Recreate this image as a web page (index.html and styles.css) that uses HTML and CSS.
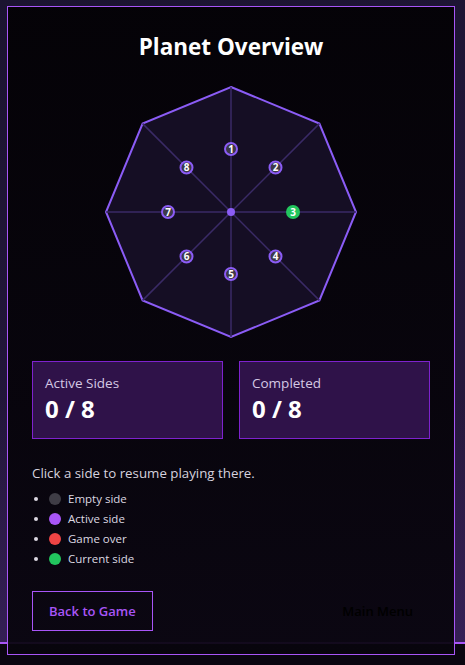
FILE: index.html
```html
<!DOCTYPE html>
<html>
<head>
<meta charset="utf-8">
<link rel="stylesheet" href="styles.css">
</head>
<body>
<div class="scene">
  <div class="footer-bar"></div>
</div>
<div class="modal">
  <h1 class="title">Planet Overview</h1>
  <svg class="planet" width="260" height="260" viewBox="-130 -130 260 260">
    <polygon class="oct" points="0,-125 88.4,-88.4 125,0 88.4,88.4 0,125 -88.4,88.4 -125,0 -88.4,-88.4"/>
    <g class="spokes">
      <line x1="0" y1="0" x2="0" y2="-125"/>
      <line x1="0" y1="0" x2="88.4" y2="-88.4"/>
      <line x1="0" y1="0" x2="125" y2="0"/>
      <line x1="0" y1="0" x2="88.4" y2="88.4"/>
      <line x1="0" y1="0" x2="0" y2="125"/>
      <line x1="0" y1="0" x2="-88.4" y2="88.4"/>
      <line x1="0" y1="0" x2="-125" y2="0"/>
      <line x1="0" y1="0" x2="-88.4" y2="-88.4"/>
    </g>
    <circle class="core" cx="0" cy="0" r="4"/>
    <g class="marker"><circle cx="0" cy="-63" r="6"/><text x="0" y="-59.5">1</text></g>
    <g class="marker"><circle cx="44.5" cy="-44.5" r="6"/><text x="44.5" y="-41">2</text></g>
    <g class="marker current"><circle cx="62" cy="0" r="7"/><text x="62" y="3.5">3</text></g>
    <g class="marker"><circle cx="44.5" cy="44.5" r="6"/><text x="44.5" y="48">4</text></g>
    <g class="marker"><circle cx="0" cy="62" r="6"/><text x="0" y="65.5">5</text></g>
    <g class="marker"><circle cx="-44.5" cy="44.5" r="6"/><text x="-44.5" y="48">6</text></g>
    <g class="marker"><circle cx="-63" cy="0" r="6"/><text x="-63" y="3.5">7</text></g>
    <g class="marker"><circle cx="-44.5" cy="-44.5" r="6"/><text x="-44.5" y="-41">8</text></g>
  </svg>
  <div class="stats">
    <div class="stat">
      <div class="stat-label">Active Sides</div>
      <div class="stat-value">0 / 8</div>
    </div>
    <div class="stat">
      <div class="stat-label">Completed</div>
      <div class="stat-value">0 / 8</div>
    </div>
  </div>
  <p class="hint">Click a side to resume playing there.</p>
  <ul class="legend">
    <li><span class="dot empty"></span>Empty side</li>
    <li><span class="dot active"></span>Active side</li>
    <li><span class="dot over"></span>Game over</li>
    <li><span class="dot cur"></span>Current side</li>
  </ul>
  <div class="actions">
    <button class="btn btn-outline">Back to Game</button>
    <button class="btn btn-plain">Main Menu</button>
  </div>
</div>
</body>
</html>
```
FILE: styles.css
```css
html, body {
  margin: 0;
  padding: 0;
  width: 465px;
  height: 665px;
  overflow: hidden;
}
body {
  position: relative;
  font-family: "Open Sans", "Noto Sans", sans-serif;
  background: linear-gradient(160deg, #1b1430 0%, #22163a 50%, #2c1a40 100%);
}
.scene {
  position: absolute;
  inset: 0;
  background: linear-gradient(180deg, rgba(40,25,70,0) 60%, rgba(60,35,100,0.6) 96%);
}
.footer-bar {
  position: absolute;
  left: 0;
  right: 0;
  top: 642px;
  bottom: 0;
  background: #0a0610;
  border-top: 2px solid #a855f7;
}
.modal {
  position: absolute;
  left: 7px;
  top: 6px;
  width: 448px;
  height: 649px;
  box-sizing: border-box;
  border: 1px solid #a855f7;
  background: linear-gradient(180deg, rgba(4,2,6,0.97) 0%, rgba(8,5,13,0.93) 100%);
  padding: 24px 24px 0;
  color: #fff;
}
.title {
  margin: 0;
  text-align: center;
  font-size: 22.5px;
  line-height: 31px;
  font-weight: 700;
}
.planet {
  display: block;
  margin: 20px auto 0;
}
.oct {
  fill: #150e24;
  stroke: #8b5cf6;
  stroke-width: 2;
}
.spokes line {
  stroke: #3a2a66;
  stroke-width: 1.5;
}
.core { fill: #8b5cf6; }
.marker circle {
  fill: #3d3848;
  stroke: #8b5cf6;
  stroke-width: 2;
}
.marker.current circle {
  fill: #22c55e;
  stroke: none;
}
.marker text {
  fill: #fff;
  font-size: 10px;
  font-weight: 700;
  text-anchor: middle;
  font-family: "Open Sans", sans-serif;
}
.stats {
  display: flex;
  gap: 16px;
  margin-top: 19px;
}
.stat {
  flex: 1;
  height: 78px;
  box-sizing: border-box;
  border: 1px solid #7e22ce;
  background: #2f1249;
  padding: 11px 12px;
}
.stat-label {
  font-size: 13.5px;
  line-height: 20px;
  color: #d4c8e4;
}
.stat-value {
  font-size: 24px;
  line-height: 32px;
  font-weight: 700;
  color: #fff;
}
.hint {
  margin: 24px 0 0;
  font-size: 13.3px;
  line-height: 20px;
  color: #d6d2de;
}
.legend {
  margin: 6px 0 0;
  padding: 0 0 0 17px;
  font-size: 11.5px;
  line-height: 20px;
  color: #dcd8e2;
}
.legend li::marker {
  font-size: 11px;
}
.dot {
  display: inline-block;
  width: 12px;
  height: 12px;
  border-radius: 50%;
  vertical-align: -2px;
  margin-right: 7px;
}
.dot.empty { background: #3f3d46; }
.dot.active { background: #a855f7; }
.dot.over { background: #ef4444; }
.dot.cur { background: #22c55e; }
.actions {
  display: flex;
  justify-content: space-between;
  margin-top: 22px;
}
.btn {
  height: 40px;
  padding: 0 16px;
  font-family: inherit;
  font-size: 13px;
  font-weight: 600;
  background: transparent;
  cursor: pointer;
}
.btn-outline {
  border: 1px solid #a855f7;
  color: #a855f7;
}
.btn-plain {
  border: 1px solid transparent;
  color: #000;
}
```
